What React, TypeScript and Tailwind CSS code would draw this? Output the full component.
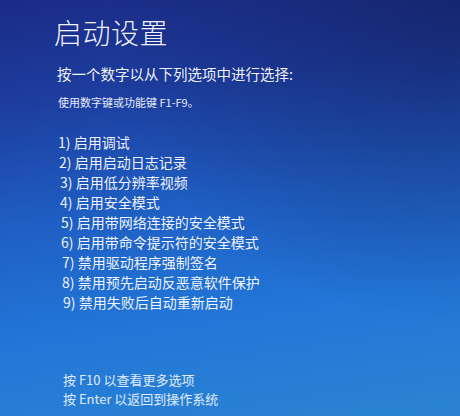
const options = [
  '启用调试',
  '启用启动日志记录',
  '启用低分辨率视频',
  '启用安全模式',
  '启用带网络连接的安全模式',
  '启用带命令提示符的安全模式',
  '禁用驱动程序强制签名',
  '禁用预先启动反恶意软件保护',
  '禁用失败后自动重新启动',
]

// perspective in the photo pushes lower rows slightly right
const indents = ['pl-[58px]', 'pl-[59px]', 'pl-[60px]', 'pl-[60px]', 'pl-[61px]', 'pl-[61px]', 'pl-[62px]', 'pl-[62px]', 'pl-[63px]']

export default function App() {
  return (
    <div
      className="relative h-[416px] w-[460px] overflow-hidden text-white bg-[linear-gradient(172deg,#1a2b85_0%,#1d3d9f_22%,#1f5fc4_48%,#2276d8_72%,#2a84d2_100%)]"
      style={{ fontFamily: '"Noto Sans CJK SC", "Noto Sans", sans-serif' }}
    >
      {/* dark vignette, top-right corner of the monitor photo */}
      <div className="pointer-events-none absolute inset-0 bg-[radial-gradient(ellipse_at_100%_0%,rgba(16,24,80,0.55)_0%,rgba(16,24,80,0)_55%)]" />

      <div className="relative flex flex-col">
        <h1 className="pl-[54px] pt-[12px] text-[28px] font-light leading-[40px] tracking-[0.5px] text-white/95">
          启动设置
        </h1>

        <p className="mt-[12px] pl-[57px] text-[14.5px] leading-[20px] text-white/95">
          按一个数字以从下列选项中进行选择:
        </p>

        <p className="mt-[10px] pl-[58px] text-[11px] leading-[16px] text-white/90">
          使用数字键或功能键 F1-F9。
        </p>

        <ul className="mt-[22px] flex flex-col">
          {options.map((label, i) => (
            <li key={label} className={`${indents[i]} text-[14px] leading-[20px] text-white/95`}>
              {i + 1}) {label}
            </li>
          ))}
        </ul>

        <div className="mt-[59px] flex flex-col gap-px pl-[63px] text-[13px] leading-[18px] text-white/85">
          <span>按 F10 以查看更多选项</span>
          <span>按 Enter 以返回到操作系统</span>
        </div>
      </div>
    </div>
  )
}
